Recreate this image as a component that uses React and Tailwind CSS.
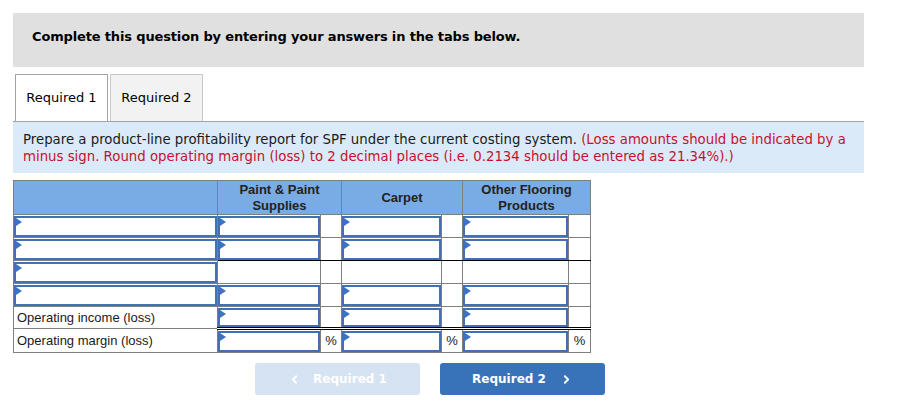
import { ChevronLeft, ChevronRight } from 'lucide-react';

const cols = ['Paint & Paint Supplies', 'Carpet', 'Other Flooring Products'];

// which rows have input boxes, and where the black rule goes under numeric cells
const rows = [
  { label: null, inputs: true, rule: '' },
  { label: null, inputs: true, rule: 'border-b-black' },
  { label: null, inputs: false, rule: '' },
  { label: null, inputs: true, rule: 'border-b-black' },
  { label: 'Operating income (loss)', inputs: true, rule: 'border-b-[3px] border-b-black border-double', short: true },
  { label: 'Operating margin (loss)', inputs: true, rule: '', pct: true },
];

function InputBox({ short }) {
  return (
    <div className={`relative ${short ? 'h-[19px]' : 'h-[21px]'} border-2 border-[#4270b5] bg-white`}>
      <span className="absolute left-0 top-0 w-0 h-0 border-y-[4px] border-y-transparent border-l-[6px] border-l-[#3b74c4]" />
    </div>
  );
}

export default function App() {
  return (
    <div className="bg-white min-h-screen pt-[13px] pl-[13px]" style={{ width: 908, height: 409 }}>
      <div className="w-[851px]">
        <div className="bg-[#e0e0e0] h-[54px] pt-[14px] pl-[19px]">
          <p className="font-['DejaVu_Sans',Verdana,sans-serif] font-bold text-[13px] tracking-[-0.15px] text-black">
            Complete this question by entering your answers in the tabs below.
          </p>
        </div>

        <div className="mt-[7px] flex pl-[2px] gap-[2px] border-b border-[#a3a3a3]">
          <div className="h-[47px] w-[93px] flex items-center justify-center bg-white border border-b-0 border-[#a3a3a3] font-['DejaVu_Sans',Verdana,sans-serif] text-[13px] text-black">
            Required 1
          </div>
          <div className="h-[47px] w-[93px] flex items-center justify-center bg-[#f2f2f2] border border-b-0 border-[#c8c8c8] font-['DejaVu_Sans',Verdana,sans-serif] text-[13px] text-black">
            Required 2
          </div>
        </div>

        <div className="bg-[#dbeaf8] h-[51px] pl-[10px] pr-[12px] pt-[9px] font-['DejaVu_Sans',Verdana,sans-serif] text-[13.3px] leading-[17px] text-[#1a1a1a]">
          Prepare a product-line profitability report for SPF under the current costing system.{' '}
          <span className="text-[#c8102e]">
            (Loss amounts should be indicated by a minus sign. Round operating margin (loss) to 2 decimal places (i.e. 0.2134 should be entered as 21.34%).)
          </span>
        </div>

        <table className="mt-[7px] border-collapse font-['Liberation_Sans',Arial,sans-serif] text-[13px] text-[#1a1a1a]">
          <colgroup>
            <col className="w-[204px]" />
            <col className="w-[103px]" />
            <col className="w-[21px]" />
            <col className="w-[100px]" />
            <col className="w-[21px]" />
            <col className="w-[106px]" />
            <col className="w-[22px]" />
          </colgroup>
          <thead>
            <tr className="h-[34px] bg-[#79abe5]">
              <th className="border border-[#7f7f7f]" />
              {cols.map((c, i) => (
                <th key={i} colSpan={2} className="border border-[#7f7f7f] font-bold leading-[16px] px-2 text-[#222]">
                  {c === 'Paint & Paint Supplies' ? (<>Paint &amp; Paint<br />Supplies</>) : c === 'Other Flooring Products' ? (<>Other Flooring<br />Products</>) : c}
                </th>
              ))}
            </tr>
          </thead>
          <tbody>
            {rows.map((r, i) => (
              <tr key={i} className={r.short ? 'h-[21px]' : 'h-[23px]'}>
                <td className="border border-[#7f7f7f] p-0 align-middle">
                  {r.label ? <span className="pl-[3px]">{r.label}</span> : <InputBox />}
                </td>
                {[0, 1, 2].map((k) => (
                  <>
                    <td key={'v' + k} className={`border border-[#7f7f7f] p-0 pt-[1px] align-top ${r.rule}`}>
                      {r.inputs ? <InputBox short={r.short} /> : null}
                    </td>
                    <td key={'p' + k} className={`border border-[#7f7f7f] p-0 text-center align-middle ${r.rule}`}>
                      {r.pct ? '%' : ''}
                    </td>
                  </>
                ))}
              </tr>
            ))}
          </tbody>
        </table>

        <div className="mt-[10px] ml-[242px] flex gap-[20px] font-['DejaVu_Sans',Verdana,sans-serif] font-bold text-[12px]">
          <div className="w-[165px] h-[32px] rounded-[3px] bg-[#d6e3f2] text-white flex items-center justify-center gap-[12px]">
            <ChevronLeft size={13} strokeWidth={3.5} />
            <span>Required 1</span>
          </div>
          <div className="w-[165px] h-[32px] rounded-[3px] bg-[#3873ba] text-white flex items-center justify-center gap-[14px]">
            <span>Required 2</span>
            <ChevronRight size={13} strokeWidth={3.5} />
          </div>
        </div>
      </div>
    </div>
  );
}
